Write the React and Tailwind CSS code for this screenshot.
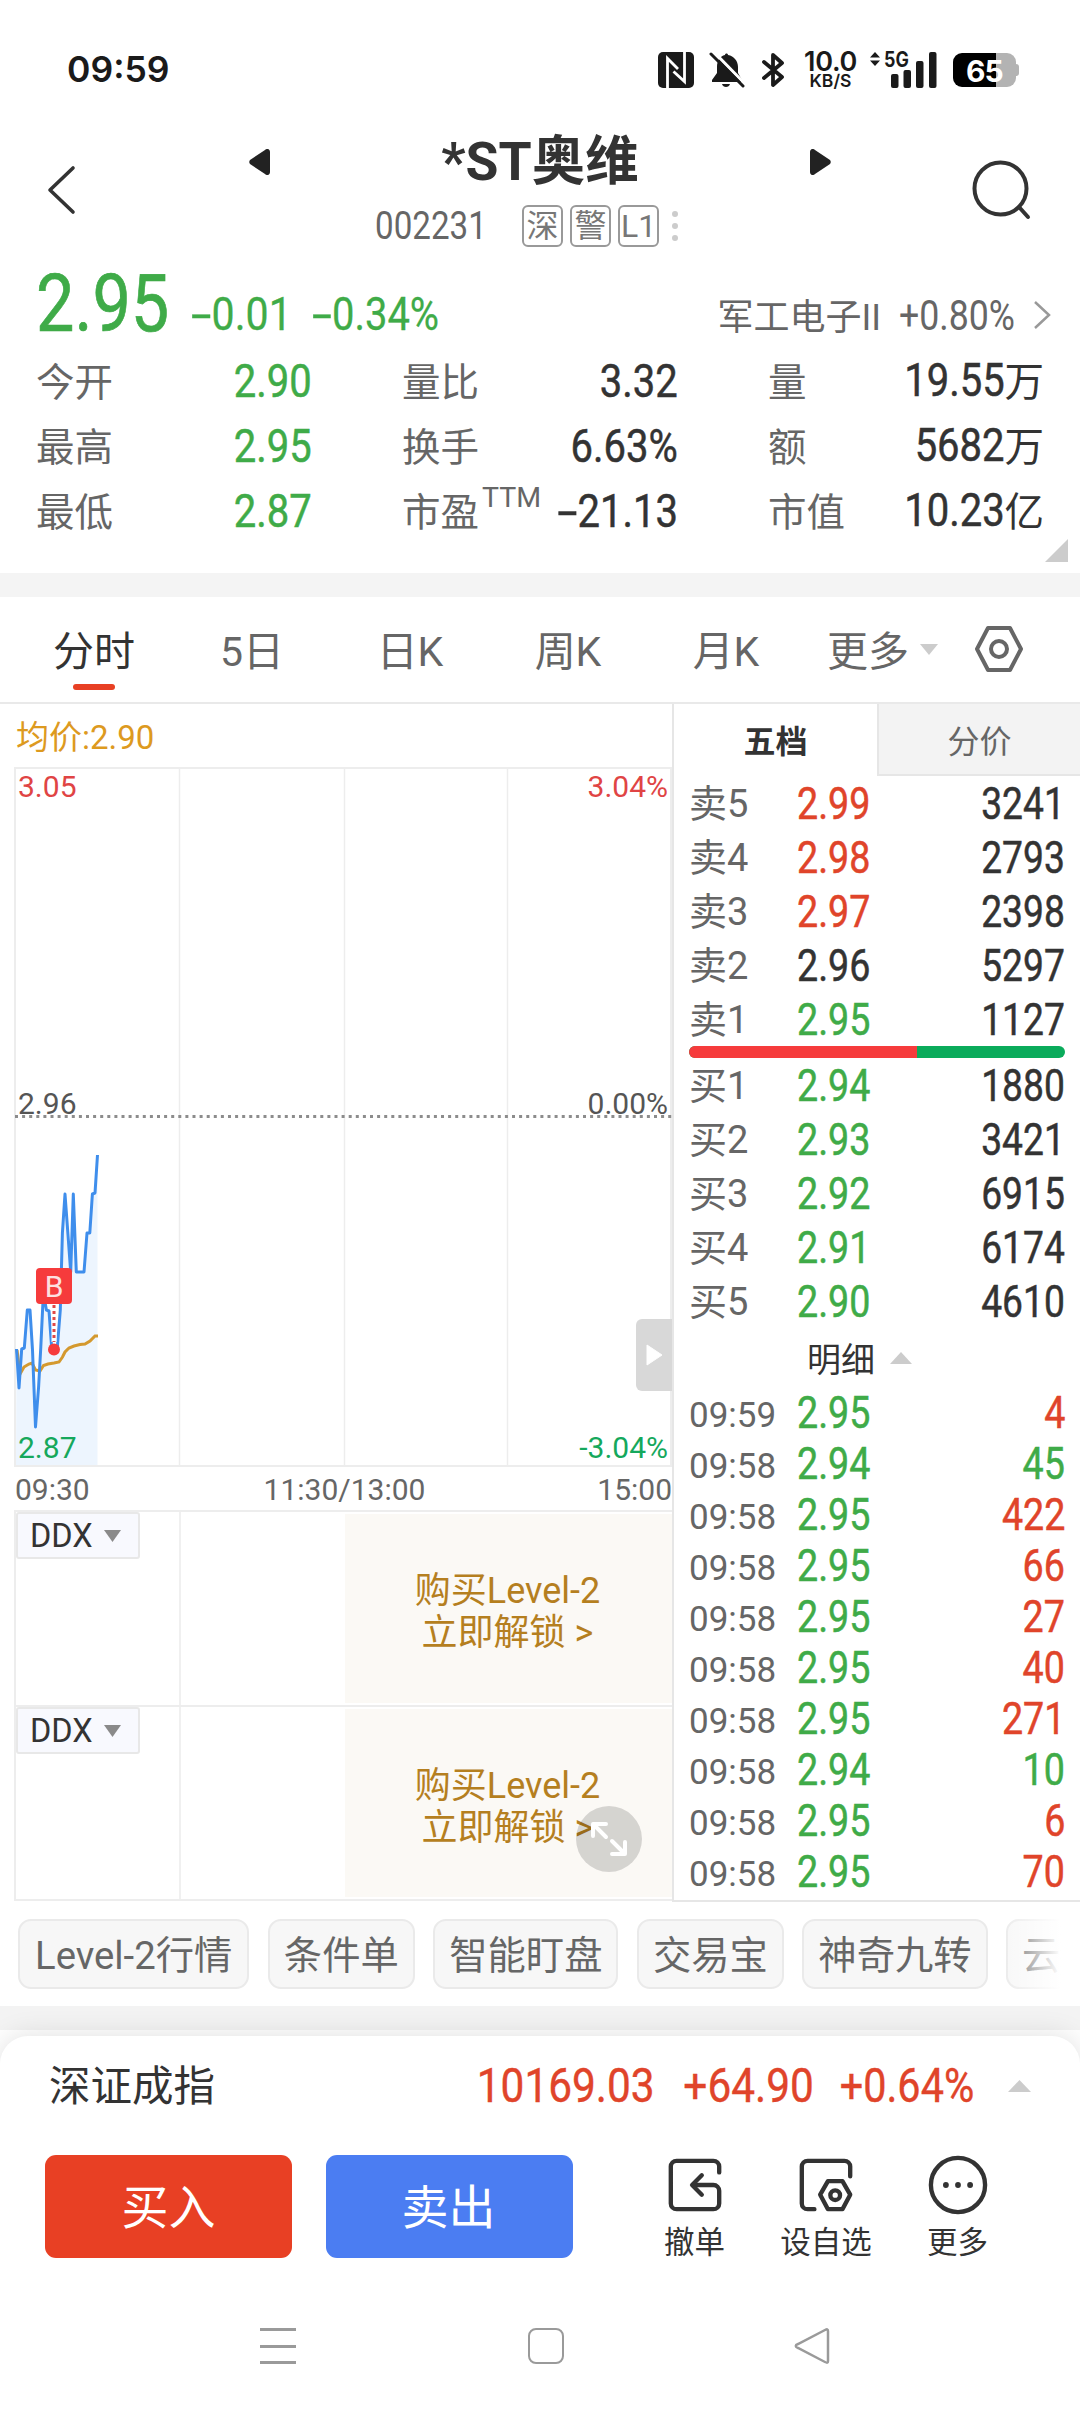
import clsx from 'clsx'

const UP = 'text-[#e0442a]'
const DOWN = 'text-[#3fab48]'
const FLAT = 'text-[#333]'

const asks = [
    ['卖5', '2.99', '3241', UP],
    ['卖4', '2.98', '2793', UP],
    ['卖3', '2.97', '2398', UP],
    ['卖2', '2.96', '5297', FLAT],
    ['卖1', '2.95', '1127', DOWN],
]

const bids = [
    ['买1', '2.94', '1880', DOWN],
    ['买2', '2.93', '3421', DOWN],
    ['买3', '2.92', '6915', DOWN],
    ['买4', '2.91', '6174', DOWN],
    ['买5', '2.90', '4610', DOWN],
]

const trades = [
    ['09:59', '2.95', '4', UP],
    ['09:58', '2.94', '45', DOWN],
    ['09:58', '2.95', '422', UP],
    ['09:58', '2.95', '66', UP],
    ['09:58', '2.95', '27', UP],
    ['09:58', '2.95', '40', UP],
    ['09:58', '2.95', '271', UP],
    ['09:58', '2.94', '10', DOWN],
    ['09:58', '2.95', '6', UP],
    ['09:58', '2.95', '70', UP],
]

const stats = [
    { label: '今开', value: '2.90', color: DOWN },
    { label: '量比', value: '3.32', color: FLAT },
    { label: '量', value: '19.55', unit: '万', color: FLAT },
    { label: '最高', value: '2.95', color: DOWN },
    { label: '换手', value: '6.63%', color: FLAT },
    { label: '额', value: '5682', unit: '万', color: FLAT },
    { label: '最低', value: '2.87', color: DOWN },
    { label: '市盈', sup: 'TTM', value: '-21.13', color: FLAT },
    { label: '市值', value: '10.23', unit: '亿', color: FLAT },
]

const chips = ['Level-2行情', '条件单', '智能盯盘', '交易宝', '神奇九转']

// Condensed digits, used for every quote figure
function Num({ children, className, scale = 'scale-x-[0.865]' }) {
    const negative = children.startsWith('-')
    return (
        <span className={clsx('inline-block whitespace-nowrap', scale, className)}>
            {negative && <span className="inline-block w-[0.5em] origin-left scale-x-[1.8]">-</span>}
            {negative ? children.slice(1) : children}
        </span>
    )
}

function StatusBar() {
    return (
        <div className="flex h-[140px] items-center pl-[67px] pr-[61px] font-['Inter'] text-[#1a1a1a]">
            <span className="text-[35.500px] font-semibold leading-none">09:59</span>
            <svg className="ml-auto" width="36" height="36" viewBox="0 0 36 36">
                <rect width="36" height="36" rx="5" fill="#1a1a1a" />
                <path d="M9.500 36V6.500L20 17M26.500 0v29.500L15.500 19.500" fill="none" stroke="#fff" strokeWidth="2.800" />
            </svg>
            <svg className="ml-[15px]" width="36" height="36" viewBox="0 0 36 36">
                <path d="M16 3c0-2 3-2 3 0 6 1 10 6 10 12v6l4 7v2H3v-2l5-7v-6C8 9 11 4 16 3z" fill="#1a1a1a" />
                <path d="M13 32h8c-1 4-7 4-8 0z" fill="#1a1a1a" />
                <path d="M3 -2L38 34" stroke="#fff" strokeWidth="3" />
                <path d="M-1 -2h9L3 13H-1z" fill="#fff" />
                <path d="M2 2L34 34" stroke="#1a1a1a" strokeWidth="3" strokeLinecap="round" />
            </svg>
            <svg className="ml-[17px]" width="23" height="36" viewBox="0 0 23 36">
                <path d="M2 10l18 15-9 8V3l9 8L2 26" fill="none" stroke="#1a1a1a" strokeWidth="3.800" strokeLinejoin="round" strokeLinecap="round" />
            </svg>
            <div className="ml-[17px] flex h-[38px] w-[57px] flex-col items-center">
                <span className="text-[27px] font-semibold leading-[21px] tracking-[-0.3px]">10.0</span>
                <span className="text-[17.500px] font-semibold leading-[18px]">KB/S</span>
            </div>
            <div className="relative ml-[11px] h-[36px] w-[67px]">
                <svg width="67" height="36" viewBox="0 0 67 36">
                    <path d="M5 0l5 5.500H0zM5 14l5-5.500H0z" fill="#1a1a1a" />
                    <rect x="21" y="22" width="7.500" height="14" rx="2" fill="#1a1a1a" />
                    <rect x="33.500" y="18" width="7.500" height="18" rx="2" fill="#1a1a1a" />
                    <rect x="46" y="9" width="7.500" height="27" rx="2" fill="#1a1a1a" />
                    <rect x="59" y="0" width="7.500" height="36" rx="2" fill="#1a1a1a" />
                </svg>
                <span className="absolute left-[14px] top-[-3px] origin-left scale-x-[0.85] text-[21px] font-bold leading-[21px]">5G</span>
            </div>
            <div className="relative ml-[16px] flex h-[34px] w-[66px] items-center">
                <div className="h-[34px] w-[63px] rounded-[9px] bg-[linear-gradient(90deg,#000_68%,#b3b3b3_68%)]" />
                <div className="h-[12px] w-[3px] rounded-r-[3px] bg-[#b3b3b3]" />
                <span className="absolute left-[13px] top-[1px] text-[30px] font-bold leading-[34px] tracking-[-1px] text-white">65</span>
            </div>
        </div>
    )
}

function Header() {
    return (
        <div className="flex h-[116px] items-start">
            <svg className="ml-[44px] mt-[25px]" width="34" height="50" viewBox="0 0 34 50">
                <path d="M29 3L6 25L29 47" fill="none" stroke="#333" strokeWidth="3.600" strokeLinecap="round" strokeLinejoin="round" />
            </svg>
            <div className="-mt-[5px] ml-[171px] w-[582px]">
                <div className="flex h-[54px] items-center justify-between">
                    <svg width="21" height="26" viewBox="0 0 21 26">
                        <path d="M21 3v20c0 3-3 4-5 2L1 15c-1-1-1-3 0-4L16 1c2-2 5-1 5 2z" fill="#222" />
                    </svg>
                    <span className="text-[53.500px] font-bold leading-[54px] text-[#333]">*ST奥维</span>
                    <svg width="21" height="26" viewBox="0 0 21 26">
                        <path d="M0 3v20c0 3 3 4 5 2l15-10c1-1 1-3 0-4L5 1C3-1 0 0 0 3z" fill="#222" />
                    </svg>
                </div>
                <div className="mt-[16px] flex h-[42px] items-center pl-[126px] text-[#666]">
                    <span className="w-[147px]">
                        <Num className="origin-left text-[39px] leading-[42px]" scale="scale-x-[0.85]">002231</Num>
                    </span>
                    <div className="flex gap-[7px] text-[32px] leading-none text-[#777]">
                        {['深', '警', 'L1'].map(tag => (
                            <span key={tag} className="flex h-[42px] w-[41px] items-center justify-center rounded-[6px] border-2 border-[#999]">
                                {tag}
                            </span>
                        ))}
                    </div>
                    <div className="ml-[13px] flex flex-col gap-[6px]">
                        <i className="size-[6px] rounded-full bg-[#ccc]" />
                        <i className="size-[6px] rounded-full bg-[#ccc]" />
                        <i className="size-[6px] rounded-full bg-[#ccc]" />
                    </div>
                </div>
            </div>
            <svg className="ml-[140px] mt-[19px]" width="62" height="62" viewBox="0 0 62 62">
                <circle cx="29.500" cy="29.500" r="26" fill="none" stroke="#333" strokeWidth="4" />
                <path d="M48 48l9 10" stroke="#333" strokeWidth="4" strokeLinecap="round" />
            </svg>
        </div>
    )
}

function Quote() {
    return (
        <div className="relative h-[317px]">
            <div className="flex h-[94px] pl-[36px] leading-none">
                <span className={clsx('mt-[8px] w-[155px] text-[79px] leading-[80px] [-webkit-text-stroke:0.7px]', DOWN)}>
                    <Num className="origin-left" scale="scale-x-[0.865]">2.95</Num>
                </span>
                <div className="flex flex-1 items-baseline pt-[34px]">
                    <span className={clsx('w-[121px] text-[47px] [-webkit-text-stroke:0.3px]', DOWN)}>
                        <Num className="origin-left" scale="scale-x-[0.875]">-0.01</Num>
                    </span>
                    <span className={clsx('w-[140px] text-[47px] [-webkit-text-stroke:0.3px]', DOWN)}>
                        <Num className="origin-left" scale="scale-x-[0.85]">-0.34%</Num>
                    </span>
                    <span className="ml-auto mr-[18px] text-[36px] text-[#666]">军工电子II</span>
                    <span className="w-[116px] text-[43px] text-[#666]">
                        <Num className="origin-left" scale="scale-x-[0.83]">+0.80%</Num>
                    </span>
                    <svg className="ml-[18px] mr-[29px]" width="18" height="30" viewBox="0 0 18 30">
                        <path d="M2 2l14 13L2 28" fill="none" stroke="#999" strokeWidth="2.500" />
                    </svg>
                </div>
            </div>
            <div className="grid grid-cols-[276px_276px_276px] gap-x-[90px] pl-[36px] text-[38.500px]">
                {stats.map(({ label, sup, value, unit, color }) => (
                    <div key={label} className="flex h-[65px] items-center justify-between leading-[65px]">
                        <span className="flex text-[#666]">
                            {label}
                            {sup && <span className="-mt-[15px] ml-[3px] text-[28.500px]">{sup}</span>}
                        </span>
                        <span className={clsx('-mt-[2px] flex items-baseline', color)}>
                            <Num className="-ml-12 origin-right text-[46.500px] [-webkit-text-stroke:0.5px]" scale="scale-x-[0.86]">{value}</Num>
                            {unit && <span className="text-[39.500px]">{unit}</span>}
                        </span>
                    </div>
                ))}
            </div>
            <svg className="absolute right-[12px] top-[283px]" width="23" height="23" viewBox="0 0 23 23">
                <path d="M23 0v23H0z" fill="#ccc" />
            </svg>
        </div>
    )
}

function PeriodTabs() {
    return (
        <div className="flex h-[107px] border-b-2 border-[#e9e9e9] pl-[15px] text-[41px] text-[#666]">
            {['分时', '5日', '日K', '周K', '月K'].map((tab, i) => (
                <div key={tab} className="relative w-[158px] text-center leading-[111px]">
                    <span className={clsx(i === 0 && 'text-[#333]')}>{tab}</span>
                    {i === 0 && <div className="absolute bottom-[12px] left-[58px] h-[6px] w-[42px] rounded-full bg-[#e84024]" />}
                </div>
            ))}
            <span className="ml-[22px] leading-[111px]">更多</span>
            <svg className="ml-[11px] mt-[47px]" width="18" height="11" viewBox="0 0 18 11">
                <path d="M0 0h18L9 11z" fill="#ccc" />
            </svg>
            <svg className="ml-[37px] mt-[28px]" width="48" height="48" viewBox="0 0 48 48" fill="none" stroke="#666" strokeWidth="4" strokeLinejoin="round">
                <path d="M13 3h22l11 21-11 21H13L2 24z" />
                <circle cx="24" cy="24" r="8" />
            </svg>
        </div>
    )
}

const priceLine = '16.5,582 19,621 21.7,582 24.3,581 27.3,543 30,543 32.5,583 35.5,660 38.6,620 40.8,580 43.4,526 46.4,543 49,544 51.6,580 54.2,583 57.2,582 60.3,543 62.4,466 65,427 70.7,505 73.3,427 76.3,505 84,505 87,466 89.8,466 92.4,427 95,426 97.5,388'
const avgLine = '17,583 20,607 24,600 29,597 32,596 35.5,603 40,604 43.5,598.5 48,597 54,596 59,595 62.5,590 65,585 69,581 74,579 80,577.5 85,577 90,574 95,569 98,569'

function Chart() {
    return (
        <div className="relative h-[743px] text-[30px] leading-none text-[#666]">
            <svg width="672" height="702" viewBox="0 0 672 702">
                <g fill="none" stroke="#ededed" strokeWidth="2">
                    <path d="M15 1H672M15 699H672M15 0V700M671 0V700" />
                    <path d="M179.500 1V699M344.500 1V699M507.500 1V699" strokeWidth="1.500" />
                </g>
                <path d={`M16,698 L${priceLine} V698 Z`} fill="#edf5fe" />
                <path d="M15 349.500H672" stroke="#8c8c8c" strokeWidth="2.800" strokeDasharray="3 4.100" />
                <polyline points={avgLine} fill="none" stroke="#d4992f" strokeWidth="3" />
                <polyline points={priceLine} fill="none" stroke="#3f8eec" strokeWidth="3" strokeLinejoin="round" />
                <path d="M54 538V575" stroke="#fff" strokeWidth="5" />
                <path d="M54 538V575" stroke="#e04848" strokeWidth="3" strokeDasharray="3 3" />
                <circle cx="54" cy="582.500" r="6" fill="#f63b3c" />
                <rect x="36" y="501" width="36" height="36" rx="4" fill="#f63b3c" />
                <text x="54" y="530" fontSize="30" textAnchor="middle" fill="#fde0e0">B</text>
            </svg>
            <span className="absolute left-[18px] top-[5px] text-[#e04444]">3.05</span>
            <span className="absolute right-[4px] top-[5px] text-[#e04444]">3.04%</span>
            <span className="absolute left-[18px] top-[322px] text-[#555]">2.96</span>
            <span className="absolute right-[4px] top-[322px] text-[#555]">0.00%</span>
            <span className="absolute left-[18px] top-[666px] text-[#15a85c]">2.87</span>
            <span className="absolute right-[4px] top-[666px] text-[#15a85c]">-3.04%</span>
            <div className="absolute right-0 top-[552px] flex h-[72px] w-[36px] items-center justify-center rounded-l-[6px] bg-[#d8d8d8]">
                <svg width="17" height="22" viewBox="0 0 17 22">
                    <path d="M1 1l15 10L1 21z" fill="#fff" stroke="#fff" strokeLinejoin="round" />
                </svg>
            </div>
            <div className="mt-[6px] grid grid-cols-3 pl-[15px]">
                <span>09:30</span>
                <span className="pl-[2px] text-center">11:30/13:00</span>
                <span className="text-right">15:00</span>
            </div>
        </div>
    )
}

function DdxPanel({ last }) {
    return (
        <div className={clsx('ml-[14px] grid grid-cols-[165px_165px_1fr] border-l-2 border-t-2 border-[#ededed]', last ? 'h-[196px] border-b-2' : 'h-[195px]')}>
            <div className="border-r-2 border-[#f0f0f0]">
                <div className="flex h-[47px] w-[124px] items-center rounded-[3px] border-2 border-[#e8e8e8] bg-[#f8f9fe] pl-[12px] pt-[2px] text-[32.500px] leading-none text-[#333]">
                    DDX
                    <svg className="-mt-[2px] ml-[11px]" width="17" height="12" viewBox="0 0 17 12">
                        <path d="M0 0h17L8.500 12z" fill="#8a8a8a" />
                    </svg>
                </div>
            </div>
            <div />
            <div className="relative my-[2px] -ml-[1px] bg-[#fbf9f5] pr-[2px] pt-[56px] text-center text-[36px] leading-[42px] text-[#b57f1f]">
                <div>购买Level-2</div>
                <div>立即解锁 &gt;</div>
                {last && (
                    <div className="absolute right-[30px] top-[97px] size-[66px] rounded-full bg-black/15">
                        <svg width="66" height="66" viewBox="0 0 66 66" fill="none" stroke="#fff" strokeWidth="4" strokeLinecap="round" strokeLinejoin="round">
                            <path d="M17 30V18h13M18 19l12 12" />
                            <path d="M49 36v12H36M48 47L36 35" />
                        </svg>
                    </div>
                )}
            </div>
        </div>
    )
}

function BookRow({ row }) {
    const [label, price, qty, color] = row
    return (
        <div className="flex h-[54px] items-center pt-[3px] leading-[51px] [-webkit-text-stroke:0.5px]">
            <span className="w-[108px] text-[38px] text-[#666] [-webkit-text-stroke:0]">{label}</span>
            <Num className={clsx('origin-left text-[43.500px]', color)}>{price}</Num>
            <Num className="ml-auto origin-right text-[43.500px] text-[#333]" scale="scale-x-[0.855]">{qty}</Num>
        </div>
    )
}

function OrderBook() {
    return (
        <div className="w-[408px] border-b-2 border-l-2 border-[#e6e6e6]">
            <div className="flex h-[72px] text-center text-[32px] leading-[76px]">
                <span className="w-[203px] font-bold text-[#333]">五档</span>
                <span className="flex-1 border-b-2 border-l-2 border-[#e6e6e6] bg-[#f3f3f3] text-[#666]">分价</span>
            </div>
            <div className="pl-[15px] pr-[15px]">
                {asks.map(row => <BookRow key={row[0]} row={row} />)}
                <div className="flex h-[12px] w-[376px] overflow-hidden rounded-full bg-[#0aab5b]">
                    <div className="w-[228px] bg-[#f63b3c]" />
                </div>
                {bids.map(row => <BookRow key={row[0]} row={row} />)}
                <div className="flex h-[59px] items-center pl-[118px] pt-[5px] text-[34px] leading-[54px] text-[#333]">
                    明细
                    <svg className="-mt-[4px] ml-[15px]" width="22" height="12" viewBox="0 0 22 12">
                        <path d="M11 0l11 12H0z" fill="#ccc" />
                    </svg>
                </div>
                {trades.map(([time, price, qty, color], i) => (
                    <div key={i} className="flex h-[51px] items-center pt-[3px] leading-[48px] [-webkit-text-stroke:0.5px]">
                        <span className="w-[108px] pt-[3px] text-[35px] text-[#666] [-webkit-text-stroke:0]">{time}</span>
                        <Num className={clsx('origin-left text-[43.500px]', DOWN)}>{price}</Num>
                        <Num className={clsx('ml-auto origin-right text-[43.500px]', color)}>{qty}</Num>
                    </div>
                ))}
            </div>
        </div>
    )
}

function BottomSheet() {
    return (
        <div className="relative mt-[6px] flex-1 rounded-t-[28px] bg-white shadow-[0_0_28px_rgba(0,0,0,0.13)]">
            <div className="flex h-[100px] items-center pl-[49px] text-[49px] text-[#e0442a] [-webkit-text-stroke:0.4px]">
                <span className="mr-auto pt-[3px] text-[41.500px] text-[#333] [-webkit-text-stroke:0]">深证成指</span>
                <Num className="mr-[8px] origin-right">10169.03</Num>
                <Num className="mr-[1px] origin-right">+64.90</Num>
                <Num className="origin-right" scale="scale-x-[0.845]">+0.64%</Num>
                <svg className="ml-[34px] mr-[49px]" width="23" height="12" viewBox="0 0 23 12">
                    <path d="M11.500 0L23 12H0z" fill="#ccc" />
                </svg>
            </div>
            <div className="mt-[19px] flex h-[103px] pl-[45px] text-[#333]">
                <button className="mr-[34px] w-[247px] rounded-[11px] bg-[#e84024] pt-[4px] text-[47px] text-white">买入</button>
                <button className="mr-[74px] w-[247px] rounded-[11px] bg-[#4b7df2] pr-[2px] pt-[4px] text-[47px] text-white">卖出</button>
                <Action label="撤单" width="w-[95px]">
                    <path d="M56 18V12a6 6 0 0 0-6-6H12a6 6 0 0 0-6 6v38a6 6 0 0 0 6 6h38a6 6 0 0 0 6-6V37a6 6 0 0 0-6-6H29" />
                    <path d="M38 21L28 31l10 10" />
                </Action>
                <Action label="设自选" width="w-[168px]">
                    <path d="M56 22V12a6 6 0 0 0-6-6H12a6 6 0 0 0-6 6v38a6 6 0 0 0 6 6h7" />
                    <path d="M33 27h15l8 14-8 15H33l-8-15z" />
                    <circle cx="40.500" cy="41.500" r="5" />
                </Action>
                <Action label="更多" width="w-[95px]">
                    <circle cx="31" cy="31" r="28" />
                    <g fill="#333" stroke="none">
                        <circle cx="18.500" cy="31" r="3" />
                        <circle cx="31" cy="31" r="3" />
                        <circle cx="43.500" cy="31" r="3" />
                    </g>
                </Action>
            </div>
            <div className="mt-[70px] flex items-center pl-[260px]">
                <div className="flex h-[36px] w-[36px] flex-col justify-between">
                    <i className="h-[3px] bg-[#9a9a9a]" />
                    <i className="h-[3px] bg-[#9a9a9a]" />
                    <i className="h-[3px] bg-[#9a9a9a]" />
                </div>
                <div className="ml-[232px] size-[36px] rounded-[8px] border-[2.500px] border-[#9a9a9a]" />
                <svg className="ml-[230px]" width="36" height="36" viewBox="0 0 36 36">
                    <path d="M34 3v30c0 2-1 2-3 1L4 20c-3-1-3-3 0-4L31 2c2-1 3-1 3 1z" fill="none" stroke="#9a9a9a" strokeWidth="2.500" />
                </svg>
            </div>
        </div>
    )
}

function Action({ label, width, children }) {
    return (
        <div className={clsx('flex flex-col items-center', width)}>
            <svg width="62" height="62" viewBox="0 0 62 62" fill="none" stroke="#333" strokeWidth="4.500" strokeLinecap="round" strokeLinejoin="round">
                {children}
            </svg>
            <span className="mt-[13px] whitespace-nowrap text-[30.500px] leading-[30px]">{label}</span>
        </div>
    )
}

export default function App() {
    return (
        <div className="flex h-[2412px] w-[1080px] flex-col overflow-hidden bg-white font-['Roboto','Noto_Sans_CJK_SC',sans-serif]">
            <StatusBar />
            <Header />
            <Quote />
            <div className="h-[24px] bg-[#f4f4f4]" />
            <PeriodTabs />
            <div className="flex h-[1198px]">
                <div className="w-[672px]">
                    <div className="h-[63px] pl-[16px] text-[33px] leading-[67px] text-[#dd9a1f]">均价:2.90</div>
                    <Chart />
                    <DdxPanel />
                    <DdxPanel last />
                </div>
                <OrderBook />
            </div>
            <div className="relative flex h-[104px] gap-[18.500px] overflow-hidden pl-[18px] pt-[17px] text-[38.300px] text-[#666]">
                {[...chips, '云参数'].map((chip, i) => (
                    <span
                        key={chip}
                        className={clsx(
                            'h-[70px] shrink-0 rounded-[13px] border-2 border-[#eaeaea] bg-[#f7f7f7] leading-[69px]',
                            i === 0 ? 'px-[15px]' : 'px-[14px]'
                        )}
                    >
                        {chip}
                    </span>
                ))}
                <div className="absolute right-0 top-0 h-full w-[80px] bg-[linear-gradient(90deg,rgba(255,255,255,0),#fff_76%)]" />
            </div>
            <div className="h-[24px] shrink-0 bg-[#f3f3f3]" />
            <BottomSheet />
        </div>
    )
}
